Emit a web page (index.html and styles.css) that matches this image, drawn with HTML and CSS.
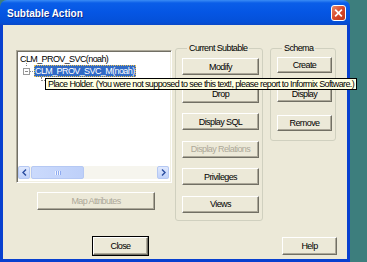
FILE: index.html
```html
<!DOCTYPE html>
<html lang="en">
<head>
    <meta charset="UTF-8">
    <meta name="viewport" content="width=device-width, initial-scale=1.0">
    <title>Subtable Action</title>
    <link rel="stylesheet" href="styles.css">
</head>
<body>

<div class="window">
    <div class="titlebar">
        <span class="title">Subtable Action</span>
        <span class="close-x">
            <svg width="14" height="14" viewBox="0 0 14 14">
                <path d="M4 4 L10 10 M10 4 L4 10" stroke="#fff" stroke-width="1.8" stroke-linecap="square"/>
            </svg>
        </span>
    </div>

    <div class="client">
        <div class="top-row">
            <div class="left-col">
                <div class="tree">
                    <div class="tree-items">
                        <div class="node">CLM_PROV_SVC(noah)</div>
                        <div class="node child">
                            <span class="line-up"></span>
                            <span class="expander"></span>
                            <span class="line-right"></span>
                            <span class="selected">CLM_PROV_SVC_M(noah)</span>
                        </div>
                        <div class="node leaf">
                            <span class="line-leaf"></span>
                        </div>
                    </div>
                    <div class="hscroll">
                        <span class="arrow">
                            <svg width="5" height="7" viewBox="0 0 5 7"><path d="M4 0.5 L1 3.5 L4 6.5" stroke="#2a4da0" stroke-width="1.4" fill="none"/></svg>
                        </span>
                        <span class="thumb"><span class="grip"></span></span>
                        <span class="track"></span>
                        <span class="arrow">
                            <svg width="5" height="7" viewBox="0 0 5 7"><path d="M1 0.5 L4 3.5 L1 6.5" stroke="#2a4da0" stroke-width="1.4" fill="none"/></svg>
                        </span>
                    </div>
                </div>
                <button class="btn map-btn" disabled>Map Attributes</button>
            </div>

            <fieldset class="group subtable">
                <legend>Current Subtable</legend>
                <button class="btn">Modify</button>
                <button class="btn">Drop</button>
                <button class="btn">Display SQL</button>
                <button class="btn" disabled>Display Relations</button>
                <button class="btn">Privileges</button>
                <button class="btn">Views</button>
            </fieldset>

            <fieldset class="group schema">
                <legend>Schema</legend>
                <button class="btn">Create</button>
                <button class="btn">Display</button>
                <button class="btn">Remove</button>
            </fieldset>
        </div>

        <div class="bottom-row">
            <button class="btn default-btn">Close</button>
            <button class="btn help-btn">Help</button>
        </div>
    </div>
</div>

<!-- tooltip ragt ueber den Fensterrand hinaus -->
<div class="tooltip">Place Holder. (You were not supposed to see this text!, please report to Informix Software.)</div>

</body>
</html>
```

FILE: styles.css
```css
body {
    margin: 0;
    background-color: #3d7e7d;
    font-family: "Liberation Sans", Arial, sans-serif;
    font-size: 9px;
    letter-spacing: -0.6px;
    width: 367px;
    height: 262px;
    overflow: hidden;
    position: relative;
}

.window {
    width: 350px;
    height: 262px;
    display: flex;
    flex-direction: column;
}

.titlebar {
    height: 25px;
    border-radius: 7px 7px 0 0;
    background: linear-gradient(to bottom, #3a8cf5 0px, #0a5ee8 3px, #0556e4 12px, #0450d8 22px, #0a48c8 25px);
    display: flex;
    align-items: center;
    justify-content: space-between;
    padding: 0 4px 0 7px;
}

.title {
    color: #fff;
    font-weight: bold;
    font-size: 10px;
    letter-spacing: 0;
    text-shadow: 1px 1px 0 #0a2a8a;
    margin-top: 2px;
}

.close-x {
    width: 13px;
    height: 14px;
    border: 1px solid #fff;
    border-radius: 3px;
    background: linear-gradient(to bottom right, #e88a6a, #d8482a 50%, #c03818);
    display: flex;
    align-items: center;
    justify-content: center;
    margin-top: 1px;
}

.client {
    flex: 1;
    background-color: #ece9d8;
    border: 3px solid #0840cf;
    border-top: none;
    padding: 18px 0 0 13px;
}

.top-row {
    display: flex;
    align-items: flex-start;
}

.left-col {
    width: 156px;
    display: flex;
    flex-direction: column;
    margin-top: 7px;
}

.tree {
    height: 133px;
    box-sizing: border-box;
    background-color: #fff;
    border: 1px solid;
    border-color: #aca899 #fff #fff #aca899;
    box-shadow: inset 1px 1px 0 #716f64, inset -1px -1px 0 #f1efe2;
    display: flex;
    flex-direction: column;
    padding: 2px 2px 3px 1px;
}

.tree-items {
    flex: 1;
    padding: 0 0 0 2px;
}

.node {
    height: 12px;
    line-height: 12px;
    display: flex;
    align-items: center;
    position: relative;
}

.child {
    padding-left: 3px;
}

.line-up {
    position: absolute;
    left: 6px;
    top: -2px;
    height: 3px;
    border-left: 1px dotted #8a8a8a;
}

.expander {
    width: 5px;
    height: 5px;
    border: 1px solid #9a9a9a;
    background: linear-gradient(#8a8a8a, #8a8a8a) center / 3px 1px no-repeat, #fff;
}

.line-right {
    width: 3px;
    border-top: 1px dotted #8a8a8a;
    margin-right: 1px;
}

.selected {
    background-color: #316ac5;
    color: #fff;
    outline: 1px dotted #e8c050;
    outline-offset: -1px;
    padding: 0 1px;
    line-height: 12px;
}

.line-leaf {
    margin-left: 21px;
    width: 5px;
    height: 3px;
    border-left: 1px dotted #8a8a8a;
    border-bottom: 1px dotted #8a8a8a;
    align-self: flex-start;
}

.hscroll {
    height: 13px;
    display: flex;
    gap: 1px;
    background-color: #f6f5ee;
}

.arrow {
    width: 12px;
    box-sizing: border-box;
    border: 1px solid #b5c8f3;
    border-radius: 2px;
    background: linear-gradient(to bottom, #dfe8fd, #c1d2f9);
    display: flex;
    align-items: center;
    justify-content: center;
}

.thumb {
    width: 53px;
    box-sizing: border-box;
    border: 1px solid #b5c8f3;
    border-radius: 2px;
    background: linear-gradient(to right, #cbdafc, #bed0f9);
    display: flex;
    align-items: center;
    justify-content: center;
}

.grip {
    width: 6px;
    height: 4px;
    background: repeating-linear-gradient(to right, #eef3fe 0 1px, #8eaaf0 1px 2px);
}

.track {
    flex: 1;
}

.btn {
    font-family: "Liberation Sans", Arial, sans-serif;
    font-size: 9px;
    letter-spacing: -0.6px;
    color: #000;
    background-color: #ece9d8;
    border: 1px solid;
    border-color: #fff #716f64 #716f64 #fff;
    box-shadow: inset -1px -1px 0 #aca899;
    padding: 0;
    height: 17px;
    box-sizing: border-box;
}

.btn:disabled {
    color: #aca899;
}

.map-btn {
    width: 118px;
    height: 18px;
    margin: 9px 0 0 21px;
}

.group {
    margin: 0;
    border: 1px solid #d0d0bf;
    border-radius: 3px;
    display: flex;
    flex-direction: column;
    min-width: 0;
}

.group legend {
    padding: 0 2px;
    margin-left: 5px;
    line-height: 10px;
}

.subtable {
    width: 88px;
    height: 178px;
    box-sizing: border-box;
    margin-left: 3px;
    padding: 5px 3px 0 6px;
    gap: 10.6px;
}

.schema {
    width: 66px;
    height: 98px;
    box-sizing: border-box;
    margin-left: 7px;
    padding: 4px 3px 0 6px;
    gap: 13px;
}

.schema .btn {
    width: 55px;
    height: 16px;
}

.bottom-row {
    display: flex;
    margin-top: 16px;
}

.default-btn {
    width: 55px;
    height: 18px;
    margin-left: 77px;
    outline: 1px solid #000;
}

.help-btn {
    width: 55px;
    height: 18px;
    margin-left: 134px;
}

.tooltip {
    position: absolute;
    left: 45px;
    top: 78px;
    height: 12px;
    box-sizing: border-box;
    padding: 0 2px;
    line-height: 10px;
    letter-spacing: -0.6px;
    background-color: #ffffe1;
    border: 1px solid #000;
    white-space: nowrap;
}
```
